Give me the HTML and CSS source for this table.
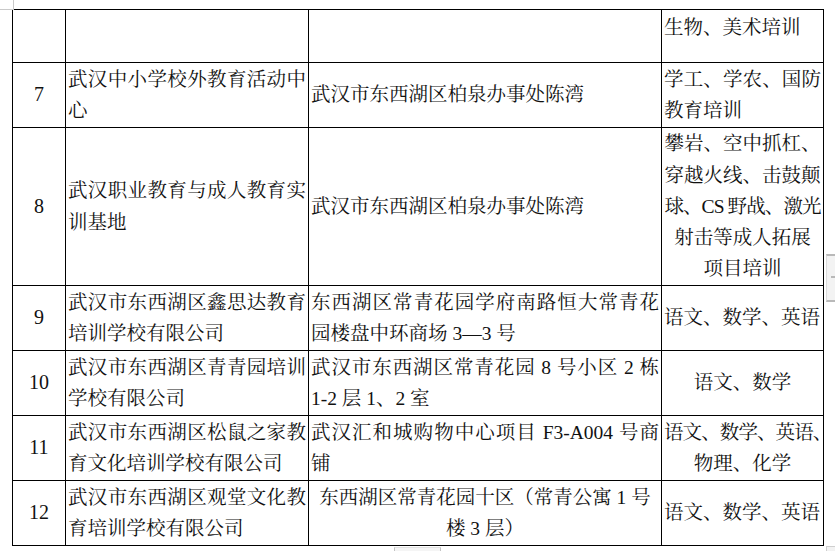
FILE: index.html
```html
<!DOCTYPE html>
<html lang="zh-CN">
<head>
<meta charset="utf-8">
<title>培训机构名单</title>
<link rel="stylesheet" href="styles.css">
</head>
<body>
<div class="page">
  <div class="crop-mark"></div>
  <table class="list">
    <colgroup>
      <col class="c-no">
      <col class="c-name">
      <col class="c-addr">
      <col class="c-item">
    </colgroup>
    <tbody>
      <tr class="r-top">
        <td class="no"></td>
        <td class="just"></td>
        <td class="just"></td>
        <td class="item top">生物、美术培训</td>
      </tr>
      <tr class="r2">
        <td class="no">7</td>
        <td class="just">武汉中小学校外教育活动中心</td>
        <td class="just">武汉市东西湖区柏泉办事处陈湾</td>
        <td class="just">学工、学农、国防教育培训</td>
      </tr>
      <tr class="r5">
        <td class="no">8</td>
        <td class="just">武汉职业教育与成人教育实训基地</td>
        <td class="just">武汉市东西湖区柏泉办事处陈湾</td>
        <td class="center tight">
          <span class="ln">攀岩、空中抓杠、</span>
          <span class="ln">穿越火线、击鼓颠</span>
          <span class="ln squeeze">球、CS&nbsp;野战、激光</span>
          <span class="ln">射击等成人拓展</span>
          <span class="ln">项目培训</span>
        </td>
      </tr>
      <tr class="r2">
        <td class="no">9</td>
        <td class="just">武汉市东西湖区鑫思达教育培训学校有限公司</td>
        <td class="just">东西湖区常青花园学府南路恒大常青花园楼盘中环商场 3—3 号</td>
        <td class="just">语文、数学、英语</td>
      </tr>
      <tr class="r2">
        <td class="no">10</td>
        <td class="just">武汉市东西湖区青青园培训学校有限公司</td>
        <td class="just">武汉市东西湖区常青花园 8 号小区 2 栋 1-2 层 1、2 室</td>
        <td class="center">语文、数学</td>
      </tr>
      <tr class="r2">
        <td class="no">11</td>
        <td class="just">武汉市东西湖区松鼠之家教育文化培训学校有限公司</td>
        <td class="just">武汉汇和城购物中心项目 F3-A004 号商铺</td>
        <td class="center">
          <span class="ln squeeze left">语文、数学、英语、</span>
          <span class="ln">物理、化学</span>
        </td>
      </tr>
      <tr class="r2">
        <td class="no">12</td>
        <td class="just">武汉市东西湖区观堂文化教育培训学校有限公司</td>
        <td class="center">东西湖区常青花园十区（常青公寓 1 号楼 3 层）</td>
        <td class="just">语文、数学、英语</td>
      </tr>
    </tbody>
  </table>
  <div class="side-tab"><span class="tick"></span></div>
  <div class="bottom-tab"></div>
  <div class="corner-tab"></div>
</div>
</body>
</html>
```

FILE: styles.css
```css
html, body {
  margin: 0;
  padding: 0;
  background: #ffffff;
}

body {
  width: 835px;
  height: 551px;
  overflow: hidden;
  font-family: "Liberation Serif", "Noto Serif CJK SC", "Noto Sans CJK SC", serif;
  font-size: 19.5px;
  color: #111111;
}

.page {
  position: relative;
  width: 835px;
  height: 551px;
  padding: 9px 0 0 12px;
  box-sizing: border-box;
}

.list {
  border-collapse: collapse;
  table-layout: fixed;
  width: 812px;
}

.c-no { width: 53px; }
.c-name { width: 243px; }
.c-addr { width: 353px; }
.c-item { width: 162px; }

.list td {
  border: 1px solid #000000;
  padding: 0 2px;
  line-height: 31.5px;
  vertical-align: middle;
  word-break: normal;
}

.r-top { height: 53px; }
.r2 { height: 65px; }
.r5 { height: 158px; }

.no {
  text-align: center;
  font-size: 20px;
}

.just {
  text-align: justify;
}

.center {
  text-align: center;
}

.list td.top {
  vertical-align: top;
  text-align: left;
  padding-top: 2px;
}

.list td.tight {
  line-height: 31.3px;
}

.ln {
  display: block;
  white-space: nowrap;
}

.squeeze {
  letter-spacing: -0.9px;
}

.left {
  text-align: left;
}

/* page furniture around the table */
.crop-mark {
  position: absolute;
  left: 0;
  top: 0;
  width: 13px;
  height: 9px;
  border-right: 1px solid #c9c9c9;
  border-bottom: 1px solid #c9c9c9;
}

.side-tab {
  position: absolute;
  left: 826px;
  top: 254px;
  width: 9px;
  height: 44px;
  background: #f3f3f3;
  border-top: 2px solid #b9b9b9;
  border-bottom: 2px solid #b9b9b9;
  border-left: 1px solid #dcdcdc;
}

.side-tab .tick {
  position: absolute;
  left: 4px;
  top: 20px;
  width: 5px;
  height: 2px;
  background: #b9b9b9;
}

.bottom-tab {
  position: absolute;
  left: 394px;
  top: 547px;
  width: 45px;
  height: 6px;
  background: #f5f5f5;
  border-left: 1px solid #c4c4c4;
  border-right: 1px solid #c4c4c4;
  border-top: 1px solid #e2e2e2;
}

.corner-tab {
  position: absolute;
  left: 826px;
  top: 546px;
  width: 9px;
  height: 6px;
  background: #f3f3f3;
  border-left: 1px solid #cfcfcf;
  border-top: 1px solid #cfcfcf;
}
```
